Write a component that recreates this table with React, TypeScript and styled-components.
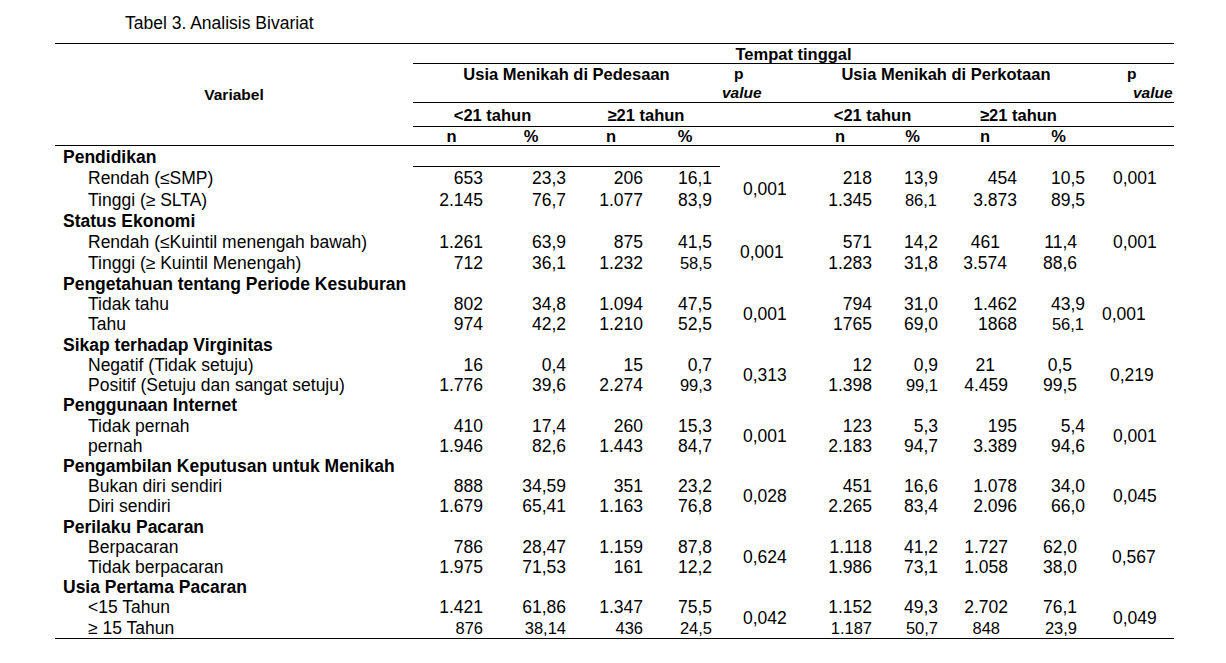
import styled, { createGlobalStyle } from "styled-components";

const GlobalStyle = createGlobalStyle`
  html, body {
    margin: 0;
    padding: 0;
    background: #fff;
  }
  body {
    font-family: "Liberation Sans", Arial, sans-serif;
    color: #000;
  }
  * {
    box-sizing: border-box;
  }
`;

const COLS = "358px 77px 82px 78px 70px 80px 80px 65px 80px 67px 82px";
// right padding of each number column (Pedesaan n,%,n,% then Perkotaan n,%,n,%)
const PAD = [7, 6, 7, 8, 8, 7, 8, 7];
const NUM_COL = [2, 3, 4, 5, 7, 8, 9, 10];

const Page = styled.div`
  width: 1226px;
  height: 663px;
  padding: 12px 0 0 55px;
`;

const Caption = styled.div`
  margin: 0 0 11px 70px;
  padding-top: 1px;
  font-size: 17.5px;
  line-height: 20px;
  height: 20px;
`;

const Table = styled.div`
  width: 1119px;
  border-top: 1px solid #000;
  border-bottom: 1px solid #000;
`;

const Head = styled.div`
  display: grid;
  grid-template-columns: ${COLS};
  grid-template-rows: 20px 39px 24px 19px;
  font-weight: 700;
  font-size: 16.5px;
`;

const HeadCell = styled.div<{ $col: string; $row: string; $rule?: boolean; $top?: boolean }>`
  grid-column: ${(p) => p.$col};
  grid-row: ${(p) => p.$row};
  border-bottom: ${(p) => (p.$rule ? "1px solid #000" : "none")};
  display: flex;
  justify-content: center;
  align-items: ${(p) => (p.$top ? "flex-start" : "center")};
  line-height: 20px;
  white-space: nowrap;
`;

const VarHead = styled(HeadCell)`
  font-size: 15.5px;
`;

const PHead = styled.div<{ $col: number }>`
  grid-column: ${(p) => p.$col};
  grid-row: 2;
  border-bottom: 1px solid #000;
  display: flex;
  flex-direction: column;
  font-size: 15.5px;
  line-height: 19px;
`;

const PLine = styled.span<{ $indent: number; $italic?: boolean }>`
  margin-left: ${(p) => p.$indent}px;
  font-style: ${(p) => (p.$italic ? "italic" : "normal")};
`;

const Section = styled.div<{ $rows: string }>`
  display: grid;
  grid-template-columns: ${COLS};
  grid-template-rows: ${(p) => p.$rows};
  font-size: 17.5px;
`;

const Category = styled.div`
  grid-column: 1;
  grid-row: 1;
  padding: 1px 0 0 8px;
  font-weight: 700;
  display: flex;
  align-items: center;
  white-space: nowrap;
`;

const CategoryRule = styled.div`
  grid-column: 2 / 6;
  grid-row: 1;
  border-bottom: 1px solid #000;
`;

const Label = styled.div<{ $row: number }>`
  grid-column: 1;
  grid-row: ${(p) => p.$row};
  padding: 1px 0 0 33px;
  display: flex;
  align-items: center;
  white-space: nowrap;
`;

const Num = styled.div<{ $row: number; $col: number; $pad: number; $small?: boolean }>`
  grid-column: ${(p) => p.$col};
  grid-row: ${(p) => p.$row};
  padding-top: 1px;
  padding-right: ${(p) => p.$pad}px;
  display: flex;
  align-items: center;
  justify-content: flex-end;
  font-size: ${(p) => (p.$small ? "16.5px" : "17.5px")};
  white-space: nowrap;
`;

const PCell = styled.div<{ $col: number; $top?: boolean; $pad: number }>`
  grid-column: ${(p) => p.$col};
  grid-row: ${(p) => (p.$top ? "2 / 3" : "2 / 4")};
  padding-top: 1px;
  padding-left: ${(p) => p.$pad}px;
  display: flex;
  align-items: center;
`;

type Cell = string | { v: string; x?: number; s?: boolean };

type Group = {
  title: string;
  rows: string;
  rule?: boolean;
  items: { label: string; cells: Cell[] }[];
  pRural: string;
  pRuralX?: number;
  pUrban: string;
  pUrbanX?: number;
  pUrbanTop?: boolean;
};

const sm = (v: string, x = 0): Cell => ({ v, s: true, x });
const sh = (v: string, x: number): Cell => ({ v, x });

const groups: Group[] = [
  {
    title: "Pendidikan",
    rows: "21px 22px 21px",
    rule: true,
    items: [
      { label: "Rendah (≤SMP)", cells: ["653", "23,3", "206", "16,1", "218", "13,9", "454", "10,5"] },
      { label: "Tinggi (≥ SLTA)", cells: ["2.145", "76,7", "1.077", "83,9", "1.345", sm("86,1", 1), "3.873", "89,5"] },
    ],
    pRural: "0,001",
    pUrban: "0,001",
    pUrbanTop: true,
  },
  {
    title: "Status Ekonomi",
    rows: "21px 21px 21px",
    items: [
      { label: "Rendah (≤Kuintil menengah bawah)", cells: ["1.261", "63,9", "875", "41,5", "571", "14,2", sh("461", 17), sh("11,4", 8)] },
      { label: "Tinggi (≥ Kuintil Menengah)", cells: ["712", "36,1", "1.232", sm("58,5"), "1.283", "31,8", sh("3.574", 10), sh("88,6", 8)] },
    ],
    pRural: "0,001",
    pRuralX: -3,
    pUrban: "0,001",
    pUrbanTop: true,
  },
  {
    title: "Pengetahuan tentang Periode Kesuburan",
    rows: "21px 20px 20px",
    items: [
      { label: "Tidak tahu", cells: ["802", "34,8", "1.094", "47,5", "794", "31,0", "1.462", "43,9"] },
      { label: "Tahu", cells: ["974", "42,2", "1.210", "52,5", "1765", "69,0", "1868", sm("56,1", 1)] },
    ],
    pRural: "0,001",
    pUrban: "0,001",
    pUrbanX: -11,
  },
  {
    title: "Sikap terhadap Virginitas",
    rows: "21px 20px 20px",
    items: [
      { label: "Negatif (Tidak setuju)", cells: ["16", "0,4", "15", "0,7", "12", "0,9", sh("21", 22), sh("0,5", 13)] },
      { label: "Positif (Setuju dan sangat setuju)", cells: ["1.776", "39,6", "2.274", sm("99,3"), "1.398", sm("99,1"), sh("4.459", 9), sh("99,5", 8)] },
    ],
    pRural: "0,313",
    pUrban: "0,219",
    pUrbanX: -3,
  },
  {
    title: "Penggunaan Internet",
    rows: "20px 21px 20px",
    items: [
      { label: "Tidak pernah", cells: ["410", "17,4", "260", "15,3", "123", "5,3", "195", "5,4"] },
      { label: "pernah", cells: ["1.946", "82,6", "1.443", "84,7", "2.183", "94,7", "3.389", "94,6"] },
    ],
    pRural: "0,001",
    pUrban: "0,001",
  },
  {
    title: "Pengambilan Keputusan untuk Menikah",
    rows: "20px 20px 20px",
    items: [
      { label: "Bukan diri sendiri", cells: ["888", "34,59", "351", "23,2", "451", "16,6", "1.078", "34,0"] },
      { label: "Diri sendiri", cells: ["1.679", "65,41", "1.163", "76,8", "2.265", "83,4", "2.096", "66,0"] },
    ],
    pRural: "0,028",
    pUrban: "0,045",
  },
  {
    title: "Perilaku Pacaran",
    rows: "21px 20px 20px",
    items: [
      { label: "Berpacaran", cells: ["786", "28,47", "1.159", "87,8", "1.118", "41,2", sh("1.727", 9), sh("62,0", 8)] },
      { label: "Tidak berpacaran", cells: ["1.975", "71,53", "161", "12,2", "1.986", "73,1", sh("1.058", 9), sh("38,0", 8)] },
    ],
    pRural: "0,624",
    pUrban: "0,567",
    pUrbanX: -1,
  },
  {
    title: "Usia Pertama Pacaran",
    rows: "20px 20px 21px",
    items: [
      { label: "<15 Tahun", cells: ["1.421", "61,86", "1.347", "75,5", "1.152", "49,3", sh("2.702", 9), sh("76,1", 8)] },
      { label: "≥ 15 Tahun", cells: [sm("876"), sm("38,14"), sm("436"), sm("24,5"), sm("1.187"), sm("50,7"), sm("848", 17), sm("23,9", 8)] },
    ],
    pRural: "0,042",
    pUrban: "0,049",
  },
];

function Header() {
  return (
    <Head>
      <VarHead $col="1" $row="1 / 5" $rule>
        Variabel
      </VarHead>
      <HeadCell $col="2 / 12" $row="1" $rule>
        Tempat tinggal
      </HeadCell>
      <HeadCell $col="2 / 6" $row="2" $rule $top>
        Usia Menikah di Pedesaan
      </HeadCell>
      <PHead $col={6}>
        <PLine $indent={14}>p</PLine>
        <PLine $indent={2} $italic>
          value
        </PLine>
      </PHead>
      <HeadCell $col="7 / 11" $row="2" $rule $top>
        Usia Menikah di Perkotaan
      </HeadCell>
      <PHead $col={11}>
        <PLine $indent={35}>p</PLine>
        <PLine $indent={41} $italic>
          value
        </PLine>
      </PHead>

      <HeadCell $col="2 / 4" $row="3" $rule>&lt;21 tahun</HeadCell>
      <HeadCell $col="4 / 6" $row="3" $rule>≥21 tahun</HeadCell>
      <HeadCell $col="6" $row="3" $rule />
      <HeadCell $col="7 / 9" $row="3" $rule>&lt;21 tahun</HeadCell>
      <HeadCell $col="9 / 11" $row="3" $rule>≥21 tahun</HeadCell>
      <HeadCell $col="11" $row="3" $rule />

      {["n", "%", "n", "%", "", "n", "%", "n", "%", ""].map((t, i) => (
        <HeadCell key={i} $col={String(i + 2)} $row="4" $rule>
          {t}
        </HeadCell>
      ))}
    </Head>
  );
}

function GroupRows({ g }: { g: Group }) {
  return (
    <Section $rows={g.rows}>
      <Category>{g.title}</Category>
      {g.rule && <CategoryRule />}
      {g.items.map((item, r) => [
        <Label key={"l" + r} $row={r + 2}>
          {item.label}
        </Label>,
        ...item.cells.map((c, i) => {
          const cell = typeof c === "string" ? { v: c } : c;
          return (
            <Num
              key={r + "-" + i}
              $row={r + 2}
              $col={NUM_COL[i]}
              $pad={PAD[i] + (cell.x ?? 0)}
              $small={cell.s}
            >
              {cell.v}
            </Num>
          );
        }),
      ])}
      <PCell $col={6} $pad={23 + (g.pRuralX ?? 0)}>
        {g.pRural}
      </PCell>
      <PCell $col={11} $pad={21 + (g.pUrbanX ?? 0)} $top={g.pUrbanTop}>
        {g.pUrban}
      </PCell>
    </Section>
  );
}

export default function App() {
  return (
    <>
      <GlobalStyle />
      <Page>
        <Caption>Tabel 3. Analisis Bivariat</Caption>
        <Table>
          <Header />
          {groups.map((g) => (
            <GroupRows key={g.title} g={g} />
          ))}
        </Table>
      </Page>
    </>
  );
}
